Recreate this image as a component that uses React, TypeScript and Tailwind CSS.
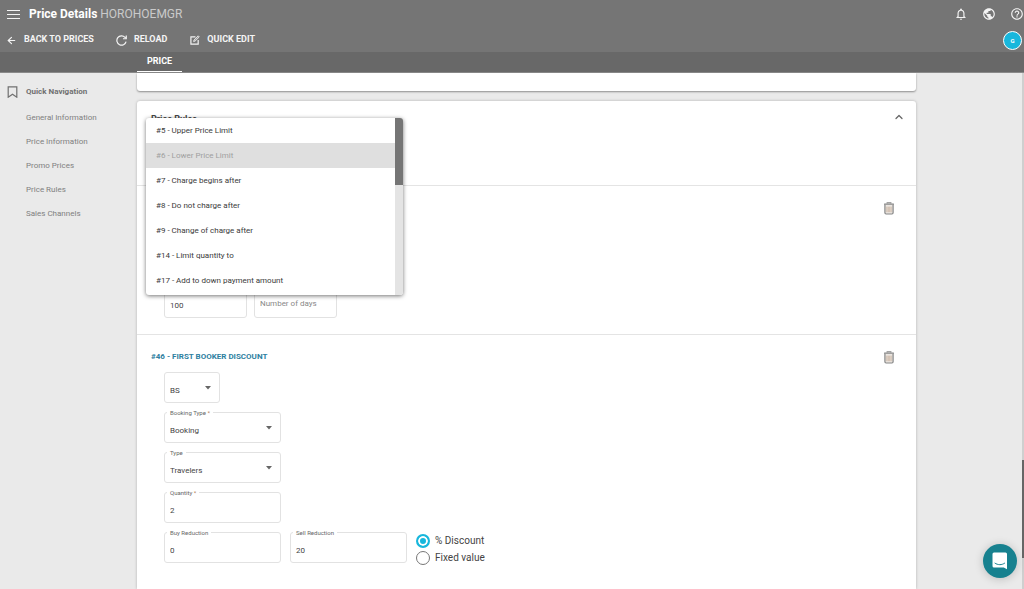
import React, { useState } from "react";
import { ArrowLeft, ChevronUp } from "lucide-react";
import { MdHelpOutline, MdNotificationsNone, MdPublic } from "react-icons/md";

// ── Data ─────────────────────────────────────────────────────

const NAV_LINKS = [
    "General Information",
    "Price Information",
    "Promo Prices",
    "Price Rules",
    "Sales Channels",
];

const RULE_OPTIONS = [
    { label: "#5 - Upper Price Limit" },
    { label: "#6 - Lower Price Limit", disabled: true },
    { label: "#7 - Charge begins after" },
    { label: "#8 - Do not charge after" },
    { label: "#9 - Change of charge after" },
    { label: "#14 - Limit quantity to" },
    { label: "#17 - Add to down payment amount" },
];

// ── Icons ────────────────────────────────────────────────────

function MenuIcon() {
    return (
        <svg width="13" height="11" viewBox="0 0 13 11" stroke="currentColor" strokeWidth="1.2">
            <path d="M0 1.5h13M0 5.5h13M0 9.5h13" />
        </svg>
    );
}

function ReloadIcon() {
    return (
        <svg width="11" height="11" viewBox="0 0 12 12" fill="none" stroke="currentColor" strokeWidth="1.3">
            <path d="M11 7.2A5.1 5.1 0 1 1 9.8 2.5L10.6 3.3" />
            <path d="M11.2 0.6v3.5H7.6" />
        </svg>
    );
}

function EditIcon() {
    return (
        <svg width="10" height="10" viewBox="0 0 11 11" fill="none" stroke="currentColor" strokeWidth="1.3">
            <path d="M6 2H1v8h8V5.6" />
            <path d="M4 7.2l.4-1.8L9 .9l1.2 1.2-4.6 4.6z" fill="currentColor" fillOpacity="0.35" strokeWidth="0.9" />
        </svg>
    );
}

function BookmarkIcon() {
    return (
        <svg width="11" height="12" viewBox="0 0 11 12" fill="none" stroke="currentColor" strokeWidth="1.2">
            <path d="M1.2.8h8.6v10.4L5.5 8.2l-4.3 3z" />
        </svg>
    );
}

function TrashIcon() {
    return (
        <svg width="12" height="13" viewBox="0 0 12 14" fill="none">
            <path d="M4 1.6V.8h4v.8" stroke="#858585" strokeWidth="1.2" />
            <path d="M.8 2.4h10.4" stroke="#858585" strokeWidth="1.6" />
            <path d="M1.6 3v8.6c0 .8.5 1.3 1.2 1.3h6.4c.7 0 1.2-.5 1.2-1.3V3" fill="#ebe6e1" stroke="#858585" strokeWidth="1.3" />
            <path d="M3.7 5v6M5.2 5v6M6.8 5v6M8.3 5v6" stroke="#c3aa95" strokeWidth="0.8" />
        </svg>
    );
}

function ChatIcon() {
    return (
        <svg width="16" height="18" viewBox="0 0 16 18">
            <path d="M2 .5h11.5A1.5 1.5 0 0 1 15 2v15.2l-3.2-1.7H2A1.5 1.5 0 0 1 .5 14V2A1.5 1.5 0 0 1 2 .5z" fill="#fff" />
            <path d="M3 11.2c2.8 2 6.8 2 9.6 0" fill="none" stroke="#17818f" strokeWidth="1" strokeLinecap="round" />
        </svg>
    );
}

// ── Form fields ──────────────────────────────────────────────

function Field({ id, label, required, className, children }: {
    id: string;
    label?: string;
    required?: boolean;
    className: string;
    children: React.ReactNode;
}) {
    return (
        <div className={`relative flex h-[31px] rounded-[3px] border border-[#e2e2e2] ${className}`}>
            {label && (
                <label htmlFor={id} className="absolute left-[2px] top-[-5px] bg-white px-[3px] text-[6px] leading-[10px] text-[#666]">
                    {label}
                    {required && <span className="text-[#b5835a]"> *</span>}
                </label>
            )}
            {children}
        </div>
    );
}

function TextField({ id, label, required, value, width = "w-[117px]" }: {
    id: string;
    label?: string;
    required?: boolean;
    value: string;
    width?: string;
}) {
    return (
        <Field id={id} label={label} required={required} className={width}>
            <input
                id={id}
                aria-label={label ? undefined : "Value"}
                defaultValue={value}
                className="w-full bg-transparent px-[5px] pt-[6px] text-[8px] text-[#444] outline-none"
            />
        </Field>
    );
}

function SelectField({ id, label, required, value, width = "w-[117px]" }: {
    id: string;
    label?: string;
    required?: boolean;
    value: string;
    width?: string;
}) {
    return (
        <Field id={id} label={label} required={required} className={width}>
            <select
                id={id}
                aria-label={label ? undefined : "Code"}
                className="w-full appearance-none bg-transparent px-[5px] pt-[6px] text-[8px] text-[#444] outline-none"
            >
                <option>{value}</option>
            </select>
            <svg width="6" height="4" viewBox="0 0 6 4" className="pointer-events-none absolute right-[8px] top-[13px]">
                <path d="M0 0h6L3 3.4z" fill="#666" />
            </svg>
        </Field>
    );
}

function Radio({ label, checked, onChange }: { label: string; checked: boolean; onChange: () => void }) {
    return (
        <label className="flex h-[17px] items-center gap-[5px] text-[10px] text-[#444]">
            <input
                type="radio"
                name="reduction"
                checked={checked}
                onChange={onChange}
                className="size-[14px] appearance-none rounded-full border border-[#777] bg-white checked:border-2 checked:border-[#18b7dc] checked:bg-[#18b7dc] checked:shadow-[inset_0_0_0_2px_#fff]"
            />
            {label}
        </label>
    );
}

// ── Header ───────────────────────────────────────────────────

function Header() {
    return (
        <header className="shrink-0 border-b border-[#8a8a8a] bg-[#757575] text-[#f4f4f4]">
            <div className="flex h-7 items-center pl-[7px]">
                <button aria-label="Menu"><MenuIcon /></button>
                <h1 className="ml-[9px] flex-1 text-[12px] font-bold text-white">
                    Price Details <span className="font-normal text-[#cacaca]">HOROHOEMGR</span>
                </h1>
                <div className="flex items-center gap-[14px]">
                    <button aria-label="Notifications"><MdNotificationsNone size={14} /></button>
                    <button aria-label="Language"><MdPublic size={14} /></button>
                    <button aria-label="Help"><MdHelpOutline size={14} /></button>
                </div>
            </div>
            <div className="flex h-6 items-center pl-[6px] pr-[2px] text-[9px] font-bold">
                <button className="flex items-center gap-[7px]">
                    <ArrowLeft size={11} strokeWidth={2.5} />
                    BACK TO PRICES
                </button>
                <button className="ml-[22px] flex items-center gap-[7px]">
                    <ReloadIcon />
                    RELOAD
                </button>
                <button className="ml-[23px] flex flex-1 items-center gap-[7px]">
                    <EditIcon />
                    QUICK EDIT
                </button>
                <button className="size-[19px] rounded-full border border-white bg-[#18b7dc] text-[6px] text-white">G</button>
            </div>
            <nav className="flex h-5 bg-[#686868] pl-[137px]">
                <a href="#price" className="flex items-center border-b border-white px-[10px] text-[9px] font-bold text-white">
                    PRICE
                </a>
            </nav>
        </header>
    );
}

// ── Sidebar ──────────────────────────────────────────────────

function QuickNavigation() {
    return (
        <aside className="w-[137px] shrink-0 pl-[7px] pt-[13px] text-[8px] text-[#808080]">
            <div className="flex h-3 items-center gap-[8px] font-bold text-[#707070]">
                <BookmarkIcon />
                Quick Navigation
            </div>
            <ul className="mt-[8px] pl-[19px]">
                {NAV_LINKS.map((link) => (
                    <li key={link} className="flex h-6 items-center">
                        <a href="#price">{link}</a>
                    </li>
                ))}
            </ul>
        </aside>
    );
}

// ── Rule picker menu ─────────────────────────────────────────

function RuleMenu() {
    return (
        <div className="absolute left-[9px] top-[17px] flex w-[257px] overflow-hidden rounded-[3px] bg-white shadow-[0_1px_4px_rgba(0,0,0,0.55)]">
            <ul className="flex-1 pb-[2px]">
                {RULE_OPTIONS.map((option) => (
                    <li key={option.label}>
                        <button
                            disabled={option.disabled}
                            className="block h-[25px] w-full px-[10px] text-left text-[8px] text-[#3a3a3a] disabled:bg-[#dfdfdf] disabled:text-[#a0a0a0]"
                        >
                            {option.label}
                        </button>
                    </li>
                ))}
            </ul>
            <div className="w-[8px] bg-[#e4e4e4]">
                <div className="h-[67px] bg-[#757575]" />
            </div>
        </div>
    );
}

// ── Page ─────────────────────────────────────────────────────

export default function App() {
    const [reduction, setReduction] = useState<"percent" | "fixed">("percent");

    return (
        <div className="relative flex h-screen flex-col overflow-hidden bg-[#eaeaea] font-[Roboto,sans-serif]">
            <Header />
            <div className="flex min-h-0 flex-1">
                <QuickNavigation />
                <main className="mr-[108px] flex min-w-0 flex-1 flex-col gap-[10px]">
                    <div className="h-[18px] shrink-0 rounded-b-[3px] bg-white shadow-[0_1px_2px_rgba(0,0,0,0.4)]" />
                    <section className="relative flex-1 rounded-t-[3px] bg-white shadow-[0_0_3px_rgba(0,0,0,0.25)]">
                        <div className="flex h-[85px] items-start justify-between border-b border-[#e4e4e4] pl-[14px] pr-[11px] pt-[10px]">
                            <h2 className="pt-[2px] text-[9px] leading-[12px] font-bold text-[#444]">Price Rules</h2>
                            <button aria-label="Collapse"><ChevronUp size={12} strokeWidth={2.5} className="text-[#666]" /></button>
                        </div>

                        <div className="flex h-[149px] flex-col justify-between border-b border-[#e4e4e4] pb-4 pl-[27px] pr-[21px] pt-4">
                            <button aria-label="Delete rule" className="self-end"><TrashIcon /></button>
                            <div className="flex gap-[7px]">
                                <TextField id="amount" value="100" width="w-[83px]" />
                                <Field id="days" className="w-[83px]">
                                    <input
                                        id="days"
                                        aria-label="Number of days"
                                        placeholder="Number of days"
                                        className="w-full bg-transparent px-[5px] pt-[2px] text-[8px] text-[#444] outline-none placeholder:text-[#888]"
                                    />
                                </Field>
                            </div>
                        </div>

                        <div className="pl-[14px] pr-[21px] pt-4">
                            <div className="flex items-start justify-between">
                                <h3 className="text-[8px] leading-[12px] font-bold text-[#2e7f9f]">#46 - FIRST BOOKER DISCOUNT</h3>
                                <button aria-label="Delete rule"><TrashIcon /></button>
                            </div>
                            <div className="mt-2 flex flex-col gap-[9px] pl-[13px]">
                                <SelectField id="code" value="BS" width="w-[56px]" />
                                <SelectField id="booking-type" label="Booking Type" required value="Booking" />
                                <SelectField id="type" label="Type" value="Travelers" />
                                <TextField id="quantity" label="Quantity" required value="2" />
                                <div className="flex gap-[9px]">
                                    <TextField id="buy" label="Buy Reduction" value="0" />
                                    <TextField id="sell" label="Sell Reduction" value="20" />
                                    <div className="flex flex-col">
                                        <Radio label="% Discount" checked={reduction === "percent"} onChange={() => setReduction("percent")} />
                                        <Radio label="Fixed value" checked={reduction === "fixed"} onChange={() => setReduction("fixed")} />
                                    </div>
                                </div>
                            </div>
                        </div>

                        <RuleMenu />
                    </section>
                </main>
            </div>

            {/* Page scroll thumb */}
            <div className="absolute bottom-0 right-0 top-[73px] w-[2px] bg-[#cfcfcf]">
                <div className="mt-[387px] h-[98px] bg-[#666]" />
            </div>

            {/* Chat launcher */}
            <button
                aria-label="Open chat"
                className="absolute bottom-[11px] right-[7px] flex size-[34px] items-center justify-center rounded-full bg-[#17818f] shadow-[0_1px_10px_rgba(0,0,0,0.2)]"
            >
                <ChatIcon />
            </button>
        </div>
    );
}
